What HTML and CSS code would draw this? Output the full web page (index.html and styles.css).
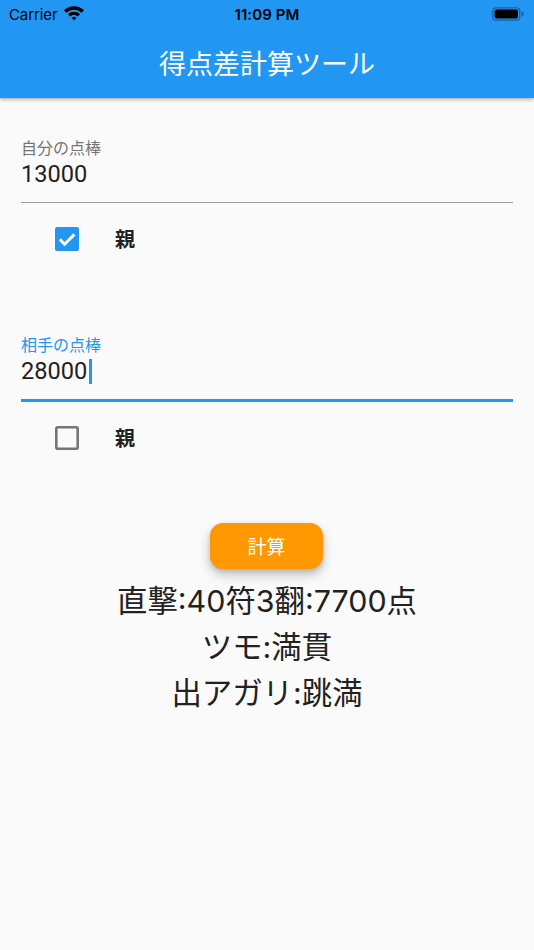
FILE: index.html
```html
<!DOCTYPE html>
<html lang="ja">
<head>
<meta charset="utf-8">
<title>得点差計算ツール</title>
<link rel="stylesheet" href="styles.css">
</head>
<body>
<div class="screen">
  <header class="appbar">
    <div class="statusbar">
      <div class="sb-left">
        <span class="carrier">Carrier</span>
        <svg class="wifi" width="22" height="16" viewBox="0 0 22 16">
          <path d="M1 5.2 A14.5 14.5 0 0 1 21 5.2 L18.6 7.7 A11 11 0 0 0 3.4 7.7 Z" fill="#000"/>
          <path d="M4.9 9.1 A9 9 0 0 1 17.1 9.1 L14.7 11.5 A5.6 5.6 0 0 0 7.3 11.5 Z" fill="#000"/>
          <path d="M8.7 12.9 A3.4 3.4 0 0 1 13.3 12.9 L11 15.3 Z" fill="#000"/>
        </svg>
      </div>
      <div class="sb-time">11:09 PM</div>
      <div class="sb-right">
        <svg class="battery" width="32" height="14" viewBox="0 0 32 14">
          <rect x="0.8" y="0.8" width="27" height="12.4" rx="3.5" fill="none" stroke="#1b5ea0" stroke-width="1.3"/>
          <rect x="2.6" y="2.6" width="23.4" height="8.8" rx="2" fill="#000"/>
          <path d="M29.6 4.6 a2 2.4 0 0 1 0 4.8 z" fill="#1b5ea0"/>
        </svg>
      </div>
    </div>
    <div class="toolbar">
      <h1 class="title">得点差計算ツール</h1>
    </div>
  </header>

  <main class="content">
    <section class="field first">
      <div class="field-label">自分の点棒</div>
      <div class="field-value">13000</div>
      <div class="field-line"></div>
    </section>
    <div class="check-row">
      <svg class="checkbox" width="24" height="24" viewBox="0 0 24 24">
        <rect x="0" y="0" width="24" height="24" rx="2" fill="#2196F3"/>
        <path d="M4.8 12.4 L9.6 17.2 L19.4 7.4" fill="none" stroke="#fff" stroke-width="3"/>
      </svg>
      <span class="check-label">親</span>
    </div>

    <section class="field second focused">
      <div class="field-label">相手の点棒</div>
      <div class="field-value">28000<span class="cursor"></span></div>
      <div class="field-line"></div>
    </section>
    <div class="check-row">
      <svg class="checkbox" width="24" height="24" viewBox="0 0 24 24">
        <rect x="1.3" y="1.3" width="21.4" height="21.4" rx="1.5" fill="none" stroke="#757575" stroke-width="2.6"/>
      </svg>
      <span class="check-label">親</span>
    </div>

    <div class="button-row">
      <button class="calc-btn">計算</button>
    </div>

    <div class="results">
      <p class="result">直撃:40符3翻:7700点</p>
      <p class="result">ツモ:満貫</p>
      <p class="result">出アガリ:跳満</p>
    </div>
  </main>
</div>
</body>
</html>
```

FILE: styles.css
```css
* { box-sizing: border-box; }
html, body {
  margin: 0;
  padding: 0;
  background: #fafafa;
}
body {
  font-family: "Noto Sans CJK JP", "Noto Sans", sans-serif;
  color: #212121;
}
.screen {
  width: 534px;
  height: 950px;
  display: flex;
  flex-direction: column;
  background: #fafafa;
  overflow: hidden;
}
.appbar {
  background: #2196F3;
  height: 98px;
  box-shadow: 0 2px 4px rgba(0,0,0,0.22), 0 1px 2px rgba(0,0,0,0.12);
  position: relative;
  z-index: 1;
  flex: none;
}
.statusbar {
  height: 28px;
  display: flex;
  align-items: center;
  justify-content: space-between;
  padding: 0 9px 0 9px;
  font-family: "Inter", "Liberation Sans", sans-serif;
  color: #000;
  position: relative;
}
.sb-left {
  display: flex;
  align-items: center;
  gap: 6px;
  width: 120px;
}
.carrier {
  font-size: 15px;
  letter-spacing: -0.1px;
}
.wifi { margin-top: -2px; }
.sb-time {
  font-size: 15px;
  font-weight: 600;
  letter-spacing: 0.1px;
}
.sb-right {
  width: 120px;
  display: flex;
  justify-content: flex-end;
  padding-right: 1px;
}
.toolbar {
  height: 70px;
  display: flex;
  align-items: center;
  justify-content: center;
}
.title {
  margin: 0;
  margin-top: -1px;
  font-size: 27px;
  font-weight: 400;
  color: #fff;
  letter-spacing: 0;
}
.content {
  flex: 1;
  padding: 0 21px;
  display: flex;
  flex-direction: column;
}
.field {
  display: flex;
  flex-direction: column;
}
.field.first { padding-top: 39px; }
.field.second { padding-top: 83px; }
.field-label {
  font-size: 16px;
  line-height: 20px;
  color: #757575;
  padding-left: 0;
}
.focused .field-label { color: #2196F3; }
.field-value {
  margin-top: 3px;
  font-family: "Roboto", "Noto Sans CJK JP", sans-serif;
  font-size: 23.6px;
  line-height: 26px;
  height: 26px;
  color: #212121;
  padding-left: 0;
  display: flex;
  align-items: center;
  position: relative;
  top: 1px;
}
.cursor {
  display: inline-block;
  width: 2.4px;
  height: 25px;
  background: #2196F3;
  margin-left: 2px;
}
.field-line {
  margin-top: 16px;
  height: 1.4px;
  background: #9e9e9e;
}
.focused .field-line {
  height: 2.6px;
  background: #2196F3;
}
.check-row {
  margin-top: 24px;
  height: 24px;
  display: flex;
  align-items: center;
  padding-left: 34px;
  gap: 36px;
}
.checkbox { flex: none; }
.check-label {
  font-size: 20px;
  font-weight: 700;
  line-height: 24px;
  color: #212121;
}
.button-row {
  margin-top: 73px;
  display: flex;
  justify-content: center;
}
.calc-btn {
  width: 113px;
  height: 46px;
  border: none;
  border-radius: 13px;
  background: #FF9800;
  color: #fff;
  font-family: "Noto Sans CJK JP", "Noto Sans", sans-serif;
  font-size: 19px;
  font-weight: 400;
  box-shadow: 0 6px 12px rgba(0,0,0,0.22), 0 2px 4px rgba(0,0,0,0.14);
  padding: 0;
  margin-left: -1px;
}
.results {
  margin-top: 9px;
  display: flex;
  flex-direction: column;
  align-items: center;
}
.result {
  margin: 0;
  font-family: "Inter", "Noto Sans CJK JP", sans-serif;
  font-size: 30.4px;
  line-height: 46px;
  color: #212121;
}
```
